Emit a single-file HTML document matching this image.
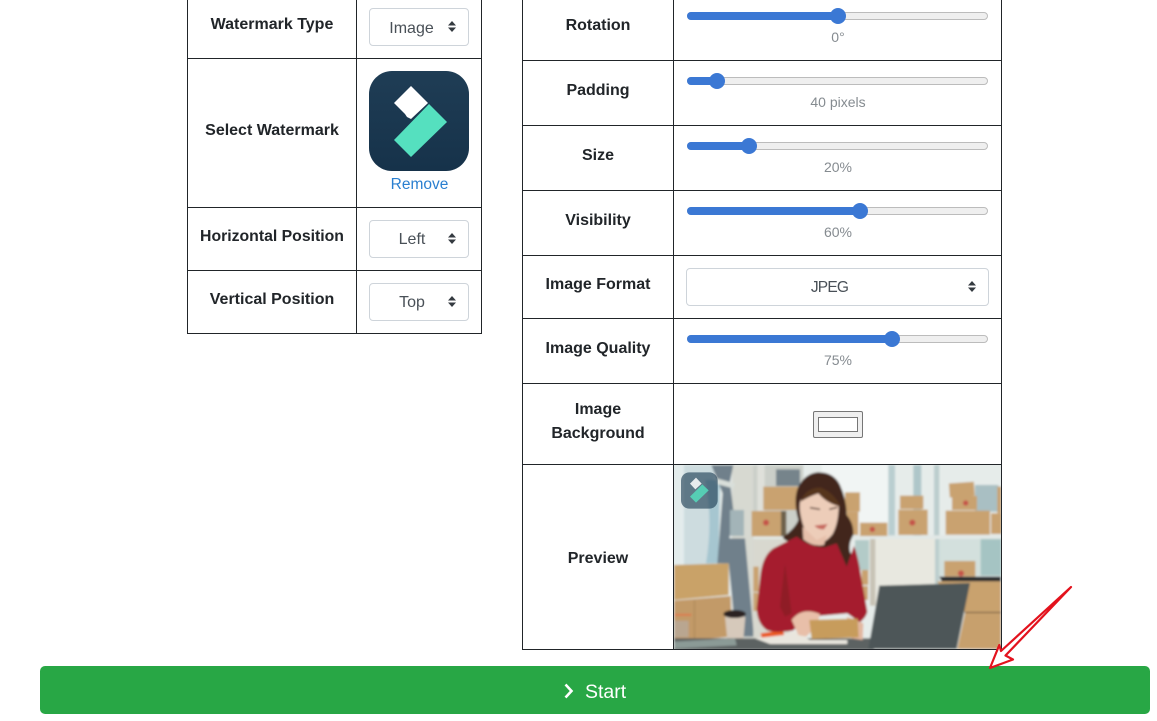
<!DOCTYPE html>
<html><head><meta charset="utf-8">
<style>
html,body{margin:0;padding:0;background:#fff}
body{position:relative;width:1157px;height:721px;overflow:hidden;font-family:"Liberation Sans",sans-serif;color:#212529}
.a{position:absolute}
.l{position:absolute;font-weight:bold;font-size:16px;line-height:24px;text-align:center;white-space:nowrap}
.m{position:absolute;font-size:14px;line-height:20px;color:#858b90;text-align:center;left:687px;width:302px}
.s{position:absolute;box-sizing:border-box;height:38px;border:1px solid #ced4da;border-radius:4px;background:#fff;color:#495057;font-size:16px;line-height:38px;text-align:center}
.s svg{position:absolute;top:12px;right:12px}
.h{position:absolute;background:#212529}
.t{position:absolute;left:687px;width:301px;height:8px;box-sizing:border-box;background:#efefef;border:1px solid #bcbcbc;border-radius:4px}
.f{position:absolute;left:687px;height:8px;background:#3b78d4;border-radius:4px}
.k{position:absolute;width:16px;height:16px;border-radius:50%;background:#3b78d4}
</style></head><body>
<!-- left table -->
<div class="h" style="left:187px;top:0;width:1px;height:334px"></div>
<div class="h" style="left:356px;top:0;width:1px;height:334px"></div>
<div class="h" style="left:481px;top:0;width:1px;height:334px"></div>
<div class="h" style="left:187px;top:58px;width:295px;height:1px"></div>
<div class="h" style="left:187px;top:207px;width:295px;height:1px"></div>
<div class="h" style="left:187px;top:270px;width:295px;height:1px"></div>
<div class="h" style="left:187px;top:333px;width:295px;height:1px"></div>
<!-- right table -->
<div class="h" style="left:522px;top:0;width:1px;height:650px"></div>
<div class="h" style="left:673px;top:0;width:1px;height:650px"></div>
<div class="h" style="left:1001px;top:0;width:1px;height:650px"></div>
<div class="h" style="left:522px;top:60px;width:480px;height:1px"></div>
<div class="h" style="left:522px;top:125px;width:480px;height:1px"></div>
<div class="h" style="left:522px;top:190px;width:480px;height:1px"></div>
<div class="h" style="left:522px;top:255px;width:480px;height:1px"></div>
<div class="h" style="left:522px;top:318px;width:480px;height:1px"></div>
<div class="h" style="left:522px;top:383px;width:480px;height:1px"></div>
<div class="h" style="left:522px;top:464px;width:480px;height:1px"></div>
<div class="h" style="left:522px;top:649px;width:480px;height:1px"></div>

<div class="l" style="left:188px;width:168px;top:13px">Watermark Type</div>
<div class="l" style="left:188px;width:168px;top:119px">Select Watermark</div>
<div class="l" style="left:188px;width:168px;top:225px;font-size:15.8px">Horizontal Position</div>
<div class="l" style="left:188px;width:168px;top:288px">Vertical Position</div>
<div class="l" style="left:523px;width:150px;top:14px">Rotation</div>
<div class="l" style="left:523px;width:150px;top:79px">Padding</div>
<div class="l" style="left:523px;width:150px;top:144px">Size</div>
<div class="l" style="left:523px;width:150px;top:209px">Visibility</div>
<div class="l" style="left:523px;width:150px;top:273px">Image Format</div>
<div class="l" style="left:523px;width:150px;top:337px">Image Quality</div>
<div class="l" style="left:523px;width:150px;top:398px">Image</div>
<div class="l" style="left:523px;width:150px;top:422px">Background</div>
<div class="l" style="left:523px;width:150px;top:547px">Preview</div>

<!-- selects -->
<div class="s" style="left:369px;top:8px;width:100px;padding-right:15px;line-height:39px">Image<svg width="8" height="11" viewBox="0 0 8 11"><path d="M4 0L8 4.500H0zM4 11L0 6.500H8z" fill="#343a40"/></svg></div>
<div class="s" style="left:369px;top:220px;width:100px;padding-right:14px">Left<svg width="8" height="11" viewBox="0 0 8 11"><path d="M4 0L8 4.500H0zM4 11L0 6.500H8z" fill="#343a40"/></svg></div>
<div class="s" style="left:369px;top:283px;width:100px;padding-right:14px">Top<svg width="8" height="11" viewBox="0 0 8 11"><path d="M4 0L8 4.500H0zM4 11L0 6.500H8z" fill="#343a40"/></svg></div>
<div class="s" style="left:686px;top:268px;width:303px;padding-right:16px;letter-spacing:-.8px;font-size:15.500px">JPEG<svg width="8" height="11" viewBox="0 0 8 11"><path d="M4 0L8 4.500H0zM4 11L0 6.500H8z" fill="#343a40"/></svg></div>

<!-- logo -->
<svg class="a" style="left:369px;top:71px" width="100" height="100" viewBox="0 0 100 100">
<defs><linearGradient id="lg" x1="0" y1="0" x2="0" y2="1"><stop offset="0" stop-color="#1f3d55"/><stop offset="1" stop-color="#16324a"/></linearGradient></defs>
<rect width="100" height="100" rx="23" fill="url(#lg)"/>
<path d="M25 32L42 15L59 32L42 48L38 46L36 43z" fill="#fff"/>
<path d="M60 33L78 51L42 86L25 69z" fill="#55e0bf"/>
</svg>
<div class="a" style="left:369px;top:175px;width:101px;text-align:center;font-size:15.500px;line-height:20px;color:#2a7fd0">Remove</div>

<!-- sliders -->
<div class="t" style="top:12px"></div><div class="f" style="top:12px;width:151px"></div><div class="k" style="left:830px;top:8px"></div><div class="m" style="top:27px">0°</div>
<div class="t" style="top:77px"></div><div class="f" style="top:77px;width:30px"></div><div class="k" style="left:709px;top:73px"></div><div class="m" style="top:92px">40 pixels</div>
<div class="t" style="top:142px"></div><div class="f" style="top:142px;width:62px"></div><div class="k" style="left:741px;top:138px"></div><div class="m" style="top:157px">20%</div>
<div class="t" style="top:207px"></div><div class="f" style="top:207px;width:173px"></div><div class="k" style="left:852px;top:203px"></div><div class="m" style="top:222px">60%</div>
<div class="t" style="top:335px"></div><div class="f" style="top:335px;width:205px"></div><div class="k" style="left:884px;top:331px"></div><div class="m" style="top:350px">75%</div>

<!-- colour swatch -->
<div class="a" style="left:813px;top:411px;width:50px;height:27px;box-sizing:border-box;background:#efefef;border:1px solid #767676;border-radius:2px"></div>
<div class="a" style="left:818px;top:417px;width:40px;height:15px;box-sizing:border-box;background:#fff;border:1px solid #767676"></div>

<!-- preview photo -->
<svg class="a" style="left:674px;top:465px" width="327" height="184" viewBox="12 15 981 552">
<defs>
<filter id="b" x="-5%" y="-5%" width="110%" height="110%"><feGaussianBlur stdDeviation="3"/></filter>
<clipPath id="c"><rect x="12" y="15" width="981" height="552"/></clipPath>
</defs>
<g clip-path="url(#c)"><g filter="url(#b)">
<rect x="0" y="0" width="1010" height="580" fill="#e6ecea"/>
<!-- left window and curtains -->
<rect x="12" y="15" width="120" height="300" fill="#cddcdf"/>
<rect x="12" y="15" width="30" height="300" fill="#e3ecec"/>
<path d="M105 60H150L145 310H108Q130 180 105 60z" fill="#a6c6d0"/>
<rect x="186" y="15" width="66" height="520" fill="#d7d9d1"/>
<path d="M124 15H190L180 65L190 150L178 235L225 235L252 530H198L176 310H142L158 100z" fill="#6f808b"/>
<rect x="180" y="150" width="42" height="78" fill="#a3b4b8"/>
<path d="M140 55L195 70L190 85L140 72z" fill="#d9dfda"/>
<!-- shelf back -->
<rect x="250" y="15" width="150" height="220" fill="#cbcfc9"/>
<rect x="262" y="15" width="22" height="220" fill="#dfe0da"/>
<rect x="318" y="28" width="72" height="50" fill="#76848b"/>
<rect x="250" y="235" width="110" height="300" fill="#d8d8cf"/>
<!-- right window -->
<rect x="455" y="15" width="205" height="210" fill="#f1f5f4"/>
<rect x="655" y="15" width="20" height="215" fill="#b9ced0"/>
<rect x="730" y="15" width="24" height="215" fill="#aec6c9"/>
<rect x="792" y="15" width="16" height="520" fill="#bccece"/>
<rect x="915" y="75" width="70" height="80" fill="#a9bfc3"/>
<rect x="250" y="226" width="745" height="11" fill="#e2e8e6"/>
<rect x="600" y="237" width="195" height="200" fill="#e8e8e0"/>
<rect x="600" y="237" width="16" height="200" fill="#c8c3b5"/>
<rect x="555" y="240" width="42" height="90" fill="#b3cbc8"/>
<rect x="808" y="237" width="185" height="110" fill="#d3e0dd"/>
<rect x="932" y="237" width="62" height="110" fill="#a5c4c3"/>
<g fill="#c9a270">
<rect x="280" y="80" width="105" height="70"/>
<rect x="245" y="153" width="88" height="76"/>
<rect x="525" y="97" width="45" height="58"/>
<rect x="530" y="155" width="35" height="70"/>
<rect x="570" y="188" width="82" height="40"/>
<rect x="690" y="107" width="70" height="40"/>
<rect x="685" y="149" width="88" height="76"/>
<rect x="838" y="68" width="75" height="42" transform="rotate(-4 875 89)"/>
<rect x="846" y="108" width="75" height="42"/>
<rect x="827" y="152" width="133" height="72"/>
<rect x="963" y="160" width="32" height="62"/>
<rect x="982" y="80" width="12" height="80"/>
<rect x="823" y="303" width="93" height="46"/>
<rect x="250" y="320" width="16" height="75"/>
<rect x="250" y="398" width="14" height="55"/>
<rect x="575" y="330" width="20" height="45"/>
<rect x="578" y="378" width="16" height="42"/>
</g>
<rect x="333" y="153" width="16" height="76" fill="#6d604c"/>
<g fill="#c5524a"><circle cx="288" cy="188" r="9"/><circle cx="607" cy="208" r="8"/><circle cx="727" cy="188" r="9"/><circle cx="887" cy="129" r="8"/><circle cx="873" cy="340" r="9"/></g>
<path d="M808 350H993V364H815z" fill="#23282b"/>
<!-- left boxes -->
<path d="M12 315L176 310V405L12 420z" fill="#c9a267"/>
<path d="M12 422L182 408L186 530L12 545z" fill="#c29a68"/>
<rect x="72" y="420" width="3" height="115" fill="#a98555"/>
<rect x="12" y="462" width="52" height="5" fill="#e0764a"/>
<rect x="12" y="482" width="44" height="50" fill="#b9a690"/>
<!-- cup -->
<path d="M165 470H226L220 540H172z" fill="#d6c9bb"/>
<ellipse cx="194" cy="462" rx="34" ry="12" fill="#2b2422"/>
<!-- table -->
<rect x="12" y="535" width="600" height="35" fill="#5c6262"/>
<path d="M12 545L195 535L200 556L12 566z" fill="#8b9a96"/>
<path d="M255 535L375 515L420 540H532V552H300z" fill="#e9e6de"/>
<path d="M272 520L340 510L342 525L275 533z" fill="#ea5a22"/>
<!-- right boxes -->
<path d="M800 364H993V456H885z" fill="#c9a26e"/>
<path d="M885 459H993V567H862z" fill="#c7a06d"/>
<rect x="884" y="456" width="110" height="3" fill="#5d4830"/>
<!-- hair -->
<path d="M440 37Q490 35 510 75Q530 120 530 165Q552 190 550 225Q535 250 540 275Q565 320 555 370Q545 400 525 405L500 350L470 270L380 240Q350 250 338 232Q375 205 385 180Q368 120 385 80Q405 42 440 37z" fill="#42281f"/>
<!-- sweater -->
<path d="M380 230Q420 262 465 262L500 250L530 320L552 258Q565 290 575 360L592 455Q590 470 570 487L532 460L420 470L368 512Q310 520 290 510Q262 490 260 445L272 340Q280 285 310 265z" fill="#a51f2e"/>
<path d="M345 310L330 440L345 470L365 460Z" fill="#8f1a28"/>
<!-- face -->
<path d="M392 120Q420 98 450 95Q490 110 506 140Q505 190 488 222Q465 252 440 248Q405 225 395 180Q385 140 392 120z" fill="#edcdb9"/>
<path d="M398 200L400 238Q430 262 462 255L470 225L440 240z" fill="#e6c0ab"/>
<path d="M392 125Q405 85 450 82Q490 95 512 140Q470 130 445 100Q415 110 392 125z" fill="#56341f"/>
<path d="M433 197L473 192L462 208Q445 210 433 197z" fill="#c76a60"/>
<path d="M420 143L450 148M478 148L502 142" stroke="#4a2c22" stroke-width="4" fill="none"/>
<!-- hands and box -->
<path d="M365 480Q395 440 450 462L440 500L408 530L385 525z" fill="#e8bfa9"/>
<path d="M530 470L580 490L578 540L545 535z" fill="#e2b7a0"/>
<path d="M418 480L563 476L566 532L425 537z" fill="#c79c5c"/>
<!-- laptop -->
<path d="M628 377L900 369L860 567H595z" fill="#4d5759"/>
</g></g>
<rect x="33" y="37" width="110" height="109" rx="25" fill="#1a3a50" fill-opacity=".62"/>
<path d="M60 71L78 53L95 71L76 88z" fill="#fff" fill-opacity=".85"/>
<path d="M97 73L116 91L78 128L60 110z" fill="#55dcbc" fill-opacity=".85"/>
</svg>

<!-- button -->
<div class="a" style="left:40px;top:666px;width:1110px;height:48px;background:#28a745;border-radius:5px"></div>
<svg class="a" style="left:563px;top:683px" width="12" height="16" viewBox="0 0 12 16"><path d="M2.500 1.500L8.500 8L2.500 14.500" fill="none" stroke="#fff" stroke-width="2.600"/></svg>
<div class="a" style="left:585px;top:679px;font-size:19.500px;line-height:26px;color:#fff">Start</div>

<!-- arrow -->
<svg class="a" style="left:980px;top:580px" width="100" height="95" viewBox="0 0 100 95">
<path d="M91 7L21 71L19.300 65L10 88L33 79.500L25.500 75.500z" fill="#fff" stroke="#e3121d" stroke-width="2.200" stroke-linejoin="round"/>
</svg>
</body></html>
